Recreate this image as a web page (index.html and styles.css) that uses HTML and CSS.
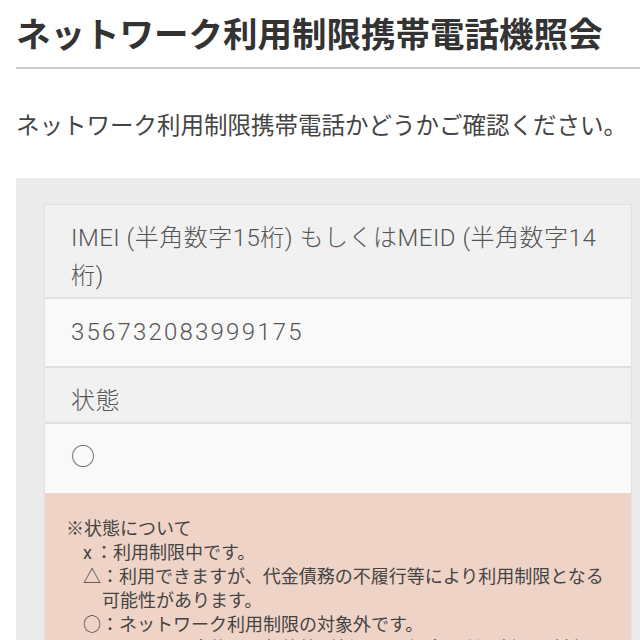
FILE: index.html
```html
<!DOCTYPE html>
<html lang="ja">
<head>
  <meta charset="UTF-8" />
  <meta name="viewport" content="width=device-width, initial-scale=1.0"/>
  <title>ネットワーク利用制限携帯電話機照会</title>
  <link rel="stylesheet" href="styles.css">
</head>
<body>
  <div class="page">
    <h1 class="title">ネットワーク利用制限携帯電話機照会</h1>
    <p class="lead">ネットワーク利用制限携帯電話かどうかご確認ください。</p>

    <div class="result-box">
      <div class="result-card">
        <div class="row row-head">IMEI (半角数字15桁) もしくはMEID (半角数字14桁)</div>
        <div class="row row-value row-number">356732083999175</div>
        <div class="row row-head">状態</div>
        <div class="row row-value row-last">○</div>
        <div class="note">
          <p class="note-title">※状態について</p>
          <ul class="note-list">
            <li><span class="mark-x">x</span>：利用制限中です。</li>
            <li>△：利用できますが、代金債務の不履行等により利用制限となる</li>
            <li class="cont">可能性があります。</li>
            <li>○：ネットワーク利用制限の対象外です。</li>
            <li class="cont">※ただし、今後不正契約等が判明した場合は利用制限の対象と</li>
          </ul>
        </div>
      </div>
    </div>
  </div>
</body>
</html>
```

FILE: styles.css
```css
body {
  margin: 0;
  padding: 0;
  background-color: #fff;
  font-family: Roboto, "Noto Sans CJK JP", sans-serif;
  color: #444;
  overflow: hidden;
}

.page {
  width: 660px;
  padding-left: 16px;
}

.title {
  margin: 0;
  padding: 11px 0 8px 0;
  font-size: 34.5px;
  line-height: 48px;
  font-weight: bold;
  color: #333;
  border-bottom: 2px solid #ccc;
}

.lead {
  margin: 40px 0 35px 0;
  font-size: 23.5px;
  line-height: 34px;
  color: #444;
}

.result-box {
  background-color: #ebebec;
  padding: 26px 0 0 28px;
}

.result-card {
  width: 586px;
  border: 1px solid #e2e2e2;
  border-bottom: none;
}

.row {
  padding: 14px 26px 15px 26px;
  font-size: 24px;
  font-weight: 300;
  line-height: 38px;
  color: #555;
  border-bottom: 2px solid #e0e0e0;
}

.row-head {
  background-color: #f1f1f1;
  padding-bottom: 2px;
  letter-spacing: 0.5px;
}

.row-value {
  background-color: #f9f9f9;
}

.row-number {
  letter-spacing: 2.2px;
}

.row-last {
  border-bottom-color: #fcfcfc;
}

.note {
  background-color: #efd3c6;
  padding: 24px 20px 20px 21px;
  font-size: 18px;
  line-height: 24px;
  color: #444;
}

.note-title {
  margin: 0;
}

.note-list {
  list-style: none;
  margin: 0;
  padding-left: 17px;
}

.mark-x {
  display: inline-block;
  width: 12px;
}

.cont {
  padding-left: 19px;
}
```
